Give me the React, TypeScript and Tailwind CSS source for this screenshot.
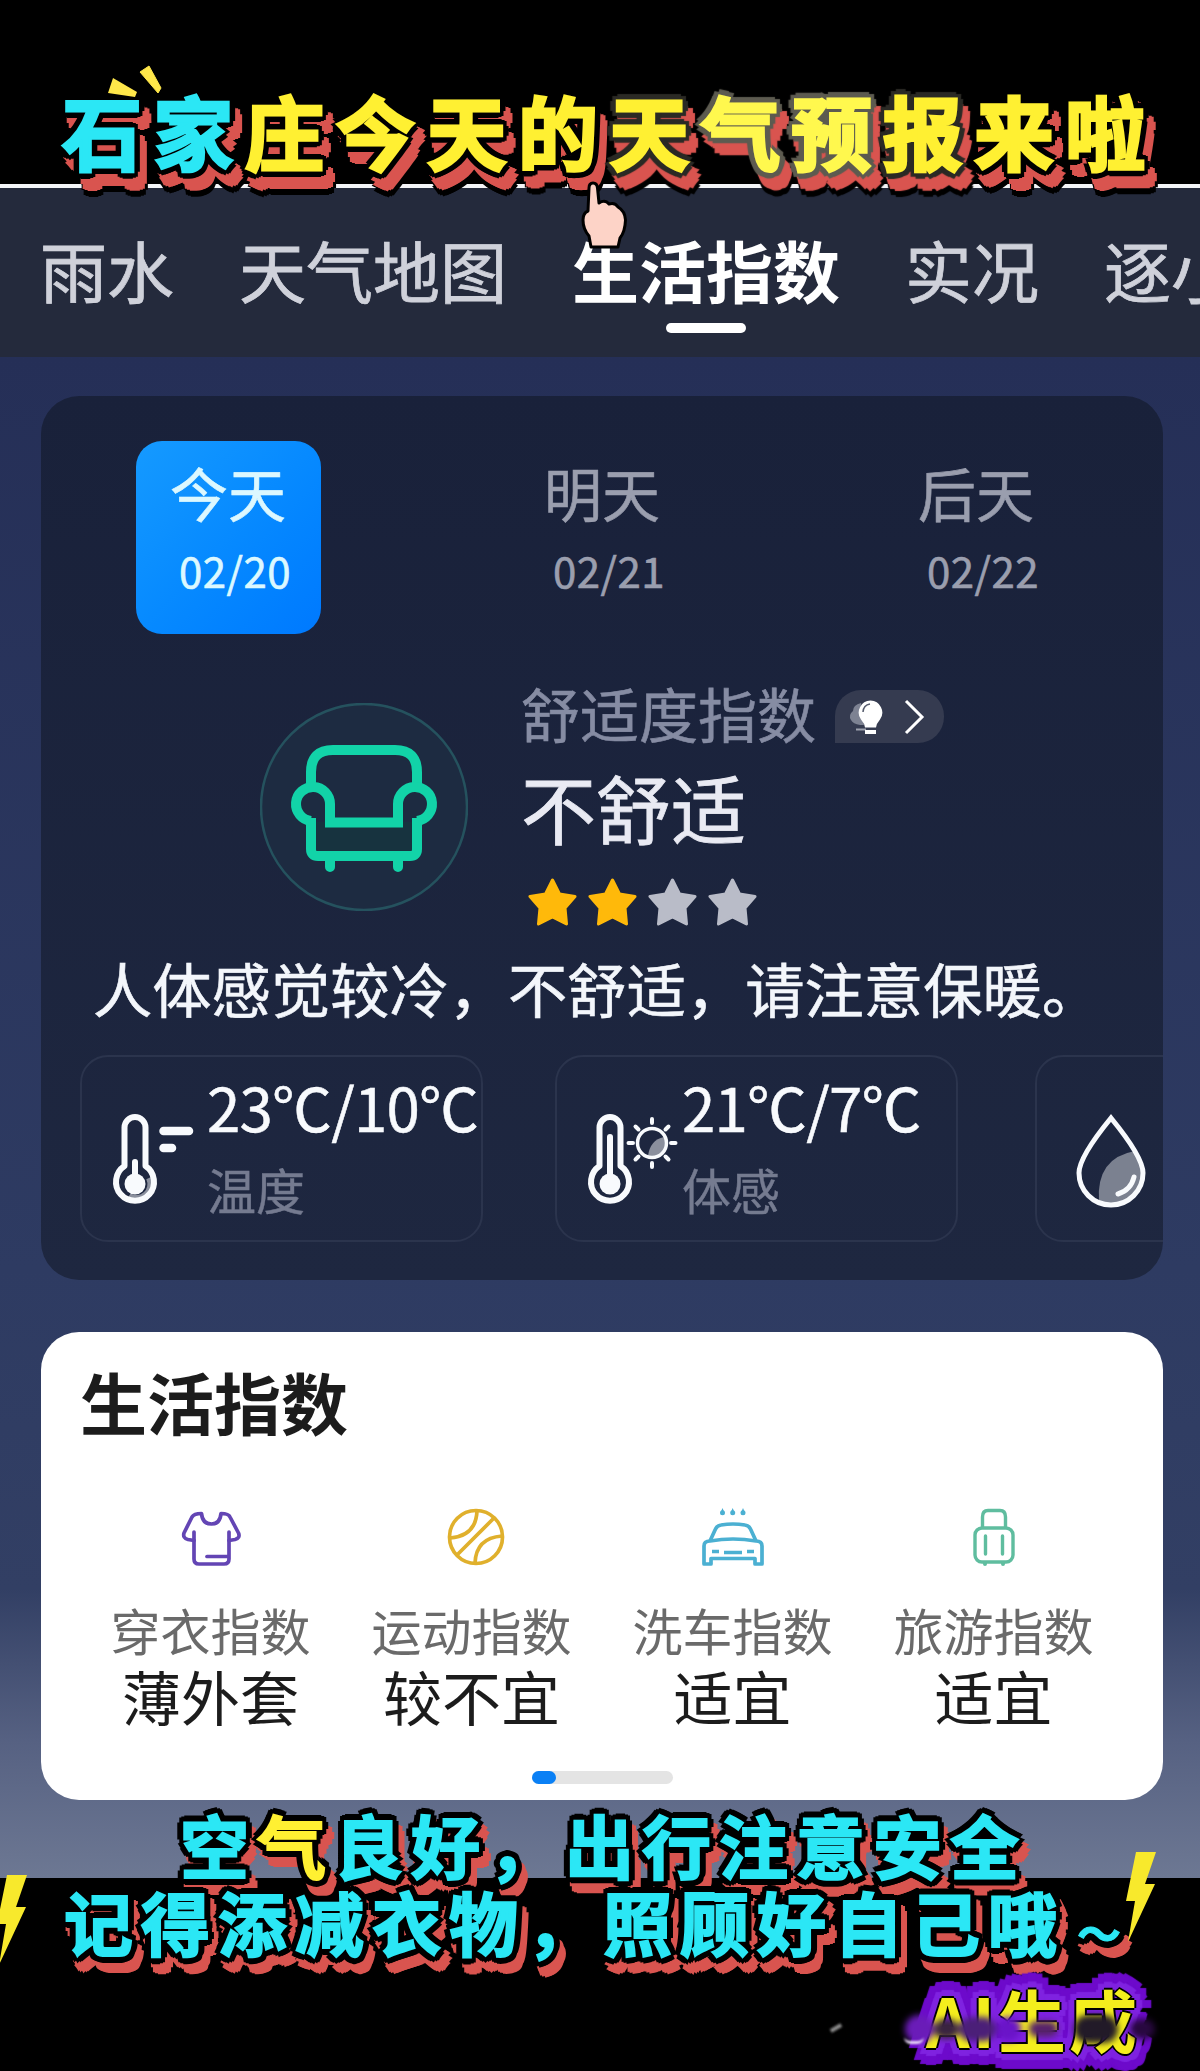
import React from 'react';

const tabs = ['雨水', '天气地图', '生活指数', '实况', '逐小时'];

const days = [
  { name: '今天', date: '02/20', active: true },
  { name: '明天', date: '02/21', active: false },
  { name: '后天', date: '02/22', active: false },
];

const outline = '[text-shadow:7px_0_0_#000,-7px_0_0_#000,0_7px_0_#000,0_-7px_0_#000,5px_5px_0_#000,-5px_5px_0_#000,5px_-5px_0_#000,-5px_-5px_0_#000,3px_6px_0_#000,-3px_6px_0_#000,3px_-6px_0_#000,-3px_-6px_0_#000]';
const outlineDim = '[text-shadow:7px_0_1px_#2b2a25,-7px_0_1px_#2b2a25,0_7px_1px_#2b2a25,0_-7px_1px_#2b2a25,5px_5px_1px_#2b2a25,-5px_5px_1px_#2b2a25,5px_-5px_1px_#2b2a25,-5px_-5px_1px_#2b2a25]';
const outlineGlow = '[text-shadow:7px_0_1px_#5d5b50,-7px_0_1px_#5d5b50,0_7px_1px_#5d5b50,0_-7px_1px_#5d5b50,5px_5px_1px_#5d5b50,-5px_5px_1px_#5d5b50,5px_-5px_1px_#5d5b50,-5px_-5px_1px_#5d5b50]';

const StarIcon: React.FC<{ on: boolean }> = ({ on }) => (
  <svg width="49" height="48" viewBox="0 0 49 48" className={on ? 'text-[#ffb90a]' : 'text-[#b9bcc8]'}>
    <path
      d="M24.500 2 L31.500 16 L47 18.500 L37 30 L38.500 46 L24.500 39 L10.500 46 L12 30 L2 18.500 L17.500 16 Z"
      fill="currentColor"
      stroke="currentColor"
      strokeWidth="3"
      strokeLinejoin="round"
    />
  </svg>
);

const SofaIcon = () => (
  <svg width="208" height="208" viewBox="260 703 208 208" fill="none">
    <circle cx="364" cy="807" r="103" fill="#1d2b41" stroke="#25525e" strokeWidth="2.500" />
    <path d="M311 821 V822 H330 H398 H417 V856 H311 Z" fill="#17333f" />
    <g stroke="#12d3a8" strokeWidth="10">
      <path d="M311 786 V772 Q311 750 333 750 H395 Q417 750 417 772 V786" />
      <path d="M311 820.900 A17 17 0 1 1 330 804 V822.500 H398 V804 A17 17 0 1 1 417 820.900" />
      <path d="M311 818 V849 Q311 856 318 856 H410 Q417 856 417 849 V818" />
      <path d="M330 856 V867 M398 856 V867" strokeLinecap="round" />
    </g>
  </svg>
);

const Thermometer: React.FC<{ top: number }> = ({ top }) => (
  <>
    <path
      d="M15.500 54 V15.500 A10.500 10.500 0 0 1 36.500 15.500 V54 A19 19 0 1 1 15.500 54 Z"
      fill="none"
      stroke="#f8fafd"
      strokeWidth="6"
      strokeLinejoin="round"
    />
    <path d={`M26 ${top} V72`} stroke="#f8fafd" strokeWidth="6" strokeLinecap="round" />
    <circle cx="26" cy="72" r="10.500" fill="#f8fafd" />
  </>
);

const TempIcon = () => (
  <svg width="90" height="98" viewBox="0 0 90 98" fill="none">
    <path d="M40 66 A14 14 0 0 1 20 84" stroke="#8a8f9d" strokeWidth="6" />
    <Thermometer top={50} />
    <path d="M54.500 19 H80" stroke="#f8fafd" strokeWidth="8.500" strokeLinecap="round" />
    <path d="M54.500 36 H63" stroke="#f8fafd" strokeWidth="8.500" strokeLinecap="round" />
  </svg>
);

const FeelIcon = () => (
  <svg width="98" height="98" viewBox="0 0 98 98" fill="none">
    <Thermometer top={25} />
    <path d="M64 44 Q66 28 80 25 A13 13 0 0 1 64 44Z" fill="#8a8f9d" />
    <circle cx="68" cy="31" r="14.500" stroke="#f8fafd" strokeWidth="3.500" />
    <path
      d="M68 7 V11 M68 51 V55 M44.500 31 H49 M87 31 H91.500 M51.500 14.500 L54.500 17.500 M81.500 44.500 L84.500 47.500 M51.500 47.500 L54.500 44.500 M81.500 17.500 L84.500 14.500"
      stroke="#f8fafd"
      strokeWidth="4"
      strokeLinecap="round"
    />
  </svg>
);

const DropIcon = () => (
  <svg width="74" height="96" viewBox="0 0 74 96" fill="none">
    <path d="M25 88 Q22 45 61 38 Q68 52 68 62 Q66 88 38 91 Q30 91 25 88Z" fill="#7b8190" />
    <path d="M37 5 Q5 44 5 60 A32 32 0 0 0 69 60 Q69 44 37 5Z" stroke="#f8fafd" strokeWidth="5" />
    <path d="M60 64 Q57 77 44 81" stroke="#f8fafd" strokeWidth="5" strokeLinecap="round" />
  </svg>
);

const ShirtIcon = () => (
  <svg width="60" height="58" viewBox="0 0 60 58" fill="none" stroke="#6345b4" strokeWidth="3.700" strokeLinecap="round" strokeLinejoin="round">
    <path d="M13 24 V51 Q13 56 18 56 H43 Q48 56 48 51 V24" />
    <path d="M13 32.500 L7 31.500 Q1.500 30 3 25 L11 9 Q13 5.500 20.500 5.500 Q21.500 16 30.500 16 Q39 16 40 5.500 Q47.500 5.500 49 9 L57.500 25 Q59.500 30 54 31.500 L48 32.500" />
    <path d="M26 48.500 H47" />
  </svg>
);

const BallIcon = () => (
  <svg width="58" height="58" viewBox="0 0 58 58" fill="none" stroke="#e0b02c" strokeWidth="3.700" strokeLinecap="round" className="ml-2">
    <circle cx="29" cy="29" r="26.500" />
    <path d="M11 46 L47 10" />
    <path d="M30 3 Q29 28 3 30" />
    <path d="M28 55 Q29 30 55 28" />
  </svg>
);

const CarIcon = () => (
  <svg width="62" height="58" viewBox="0 0 62 58" fill="none" stroke="#4bb0d2" strokeWidth="3.700" strokeLinejoin="round">
    <path d="M8 33 L13.500 21 Q15 17.500 19 17 Q31 15 43 17 Q47 17.500 48.500 21 L54 33" />
    <path d="M8 33 Q2 33 2 38 V56 H9 V50.500 H53 V56 H60 V38 Q60 33 54 33 Q31 29 8 33Z" />
    <path d="M10 43.500 H17 M22 44.500 H40 M45 43.500 H52" />
    <g fill="#4bb0d2" stroke="none">
      <path d="M20.500 0 Q24 7 20.500 7 Q17 7 20.500 0Z M30.700 0 Q34 7 30.700 7 Q27 7 30.700 0Z M41 0 Q44.500 7 41 7 Q37.500 7 41 0Z" />
      <circle cx="20.500" cy="4.800" r="2.500" />
      <circle cx="30.700" cy="4.800" r="2.500" />
      <circle cx="41" cy="4.800" r="2.500" />
    </g>
  </svg>
);

const LuggageIcon = () => (
  <svg width="42" height="58" viewBox="0 0 42 58" fill="none" stroke="#5fbd9f" strokeWidth="3.400" strokeLinecap="round">
    <path d="M9.500 19 V9 Q9.500 2.500 15 2.500 H27 Q32.500 2.500 32.500 9 V19" />
    <rect x="2" y="20" width="38" height="34" rx="7" />
    <path d="M12.500 28 V46 M29.500 28 V46" />
    <path d="M12 55.500 V56 M30 55.500 V56" strokeWidth="4" />
  </svg>
);

const BulbIcon = () => (
  <svg width="36" height="36" viewBox="0 0 36 36">
    <path d="M13 4 Q5 6 5 12 Q0 16 3 21 Q5 25 12 26 H16Z" fill="#7d8292" />
    <path d="M8 30.500 H18" stroke="#9ea2ae" strokeWidth="2" />
    <path d="M22.500 1.500 A12 12 0 0 0 13 20.500 Q16.500 24.500 17 28.500 H28 Q28.500 24.500 32 20.500 A12 12 0 0 0 22.500 1.500Z" fill="#fff" />
    <path d="M15 13 Q15.500 6 22 5" fill="none" stroke="#555b6d" strokeWidth="1.500" />
    <path d="M17 31 H28 V35 H17Z" fill="#fff" />
  </svg>
);

const BoltIcon = () => (
  <svg width="32" height="92" viewBox="0 0 32 92">
    <path d="M11 1 H31 L20 33 H30 L3 91 L10 50 H1 Z" fill="#f8e92c" />
  </svg>
);

const metrics = [
  { value: '23℃/10℃', label: '温度', icon: <TempIcon /> },
  { value: '21℃/7℃', label: '体感', icon: <FeelIcon /> },
];

const indexes = [
  { name: '穿衣指数', value: '薄外套', icon: <ShirtIcon /> },
  { name: '运动指数', value: '较不宜', icon: <BallIcon /> },
  { name: '洗车指数', value: '适宜', icon: <CarIcon /> },
  { name: '旅游指数', value: '适宜', icon: <LuggageIcon /> },
];

const TabBar = () => (
  <nav className="flex h-[173px] w-full gap-[65px] overflow-hidden border-t-4 border-[#f4f5f8] bg-[#242a3c] pl-10 pt-[47px]">
    {tabs.map((tab) => (
      <div key={tab} className="flex shrink-0 flex-col items-center">
        <span
          className={`text-[67px] leading-[67px] ${
            tab === '生活指数' ? 'font-bold text-white' : 'text-[#cfd1da] [-webkit-text-stroke:0.8px_#cfd1da]'
          }`}
        >
          {tab}
        </span>
        {tab === '生活指数' && <span className="mt-[21px] h-2.5 w-20 rounded-full bg-white" />}
      </div>
    ))}
  </nav>
);

const ComfortCard = () => (
  <section className="h-[884px] overflow-hidden rounded-[38px] bg-linear-to-b from-[#19213a] to-[#1e2740] pt-[45px]">
    <div className="grid grid-cols-3 justify-items-center">
      {days.map((day) => (
        <div
          key={day.name}
          className={`flex h-[193px] w-[185px] flex-col items-center rounded-[26px] pt-[22px] ${
            day.active
              ? 'bg-linear-to-br from-[#159aff] to-[#0079ff] text-[#dcf8ff] [-webkit-text-stroke:0.6px_#dcf8ff]'
              : 'text-[#9a9eae] [-webkit-text-stroke:0.6px_#9a9eae]'
          }`}
        >
          <span className="text-[58px] leading-[58px]">{day.name}</span>
          <span className="mt-[27px] pl-3.5 text-[42px] leading-[44px] tracking-[0.500px]">{day.date}</span>
        </div>
      ))}
    </div>

    <div className="mt-[49px] flex pl-[219px]">
      <div className="mt-5 shrink-0">
        <SofaIcon />
      </div>
      <div className="ml-[53px]">
        <div className="flex h-[59px] items-center">
          <span className="text-[59px] leading-[59px] text-[#868ca3] [-webkit-text-stroke:0.6px_#868ca3]">舒适度指数</span>
          <div className="ml-[19px] mt-2 flex h-[53px] w-[109px] items-center rounded-[26px] rounded-bl-none bg-[#353b50] pl-[13px]">
            <BulbIcon />
            <svg width="22" height="36" viewBox="0 0 22 36" fill="none" className="ml-5">
              <path d="M2 2 L18 18 L2 34" stroke="#fff" strokeWidth="3" />
            </svg>
          </div>
        </div>
        <div className="mt-[27px] text-[75px] leading-[75px] text-[#e9eaf3] [-webkit-text-stroke:0.8px_#e9eaf3]">不舒适</div>
        <div className="mt-[34px] flex gap-[11px] pl-[7px]">
          {[1, 2, 3, 4].map((n) => (
            <StarIcon key={n} on={n <= 2} />
          ))}
        </div>
      </div>
    </div>

    <p className="mt-[31px] whitespace-nowrap pl-[52px] text-[59.300px] leading-[60px] text-[#f3f6fb] [-webkit-text-stroke:0.6px_#f3f6fb]">
      人体感觉较冷，不舒适，请注意保暖。
    </p>

    <div className="mt-[38px] flex pl-[39px]">
      {metrics.map((m) => (
        <div key={m.label} className="mr-[72px] flex h-[187px] w-[403px] shrink-0 rounded-[28px] border-2 border-[#2b344d] pl-[27px] pt-[19px]">
          <div className="mt-[36px] w-[98px] shrink-0">{m.icon}</div>
          <div className="flex flex-col">
            <span className="whitespace-nowrap text-[60px] leading-[60px] tracking-[-0.800px] text-[#f8fafd] [-webkit-text-stroke:0.5px_#f8fafd]">
              {m.value}
            </span>
            <span className="mt-7 text-[49px] leading-[49px] text-[#757b90] [-webkit-text-stroke:0.4px_#757b90]">{m.label}</span>
          </div>
        </div>
      ))}
      <div className="ml-[5px] h-[187px] w-[403px] shrink-0 rounded-[28px] border-2 border-[#2b344d] pl-[37px] pt-[56px]">
        <DropIcon />
      </div>
    </div>
  </section>
);

const LifeIndexCard = () => (
  <section className="mt-[52px] h-[468px] rounded-[38px] bg-white pt-[35px]">
    <h2 className="pl-[39px] text-[67px] font-bold leading-[67px] text-[#1c1c1c]">生活指数</h2>
    <div className="mt-[74px] grid grid-cols-4 pl-[39px] pr-[39px]">
      {indexes.map((item) => (
        <div key={item.name} className="flex flex-col items-center whitespace-nowrap">
          {item.icon}
          <span className="mt-[38px] text-[50px] leading-[50px] text-[#6a6a6a]">{item.name}</span>
          <span className="mt-3 text-[59px] leading-[59px] text-[#1c1c1c]">{item.value}</span>
        </div>
      ))}
    </div>
    <div className="mx-auto mt-[46px] h-[13px] w-[141px] rounded-full bg-[#e4e4e4]">
      <div className="h-full w-6 rounded-full bg-[#0a80f5]" />
    </div>
  </section>
);

// Captions and stickers laid over the page
const Stickers = () => (
  <>
    <h1 className="absolute left-[62px] top-[87px] whitespace-nowrap text-[80px] font-bold leading-[85px] tracking-[11.200px] text-[#fff032] [filter:drop-shadow(7px_12px_0_#d9544f)_drop-shadow(1px_6px_0_#000)]">
      <span className={`text-[#2be7f5] [-webkit-text-stroke:3px_#2be7f5] ${outline}`}>石家</span>
      <span className={`[-webkit-text-stroke:3px_#fff032] ${outline}`}>庄今天的</span>
      <span className={`[-webkit-text-stroke:3px_#fff032] ${outlineDim}`}>天</span>
      <span className={`text-[#fff84e] [-webkit-text-stroke:3px_#fff84e] ${outlineGlow}`}>气预</span>
      <span className={`[-webkit-text-stroke:3px_#fff032] ${outlineDim}`}>报</span>
      <span className={`[-webkit-text-stroke:3px_#fff032] ${outline}`}>来啦</span>
    </h1>
    <svg className="absolute left-[104px] top-[60px]" width="62" height="40" viewBox="104 60 62 40" fill="#ffe74a">
      <path d="M113 78 L137 92 L135 97 L108 93Z" />
      <path d="M140 72 L149 66 L161 88 L158 93Z" stroke="#ffe74a" strokeWidth="1" strokeLinejoin="round" />
    </svg>
    <svg className="absolute left-[578px] top-[179px]" width="54" height="74" viewBox="578 178 54 74">
      <path
        d="M589 187 Q589 182 593 182 Q597 182 597.500 187 L599 202 Q605 198 609 203 Q615 201 618 206 Q625 210 625.500 219 Q625 231 620 237 L618 246 H591 L589 235 Q583 228 583 219 Q583 212 588 210 Z"
        fill="#fdd3c7"
        stroke="#000"
        strokeWidth="3"
        strokeLinejoin="round"
      />
    </svg>

    <div className="absolute left-0 top-[1806px] w-full whitespace-nowrap text-[69px] font-bold leading-[77px] tracking-[8px] text-[#2be7f5] [-webkit-text-stroke:2px_#2be7f5] [filter:drop-shadow(6px_10px_0_#d9544f)]">
      <p className={`pl-[180px] ${outline}`}>
        空<span className="text-[#fff032] [-webkit-text-stroke:2px_#fff032]">气</span>良好，出行注意安全
      </p>
      <p className={`pl-[64px] ${outline}`}>
        记得添减衣物，照顾好自己哦<span className="pl-3 text-[44px] [-webkit-text-stroke:1px_#2be7f5]">～</span>
      </p>
    </div>
    <div className="absolute left-[-4px] top-[1874px]">
      <BoltIcon />
    </div>
    <div className="absolute left-[1125px] top-[1851px]">
      <BoltIcon />
    </div>

    <div className="absolute left-[926px] top-[1983px] whitespace-nowrap text-[68px] font-bold leading-[72px] tracking-[3px] text-[#f4ee1d]">
      <span className="[text-shadow:2px_0_0_#000,-2px_0_0_#000,0_2px_0_#000,0_-2px_0_#000,8px_0_1px_#7f22e0,-8px_0_1px_#7f22e0,0_8px_1px_#7f22e0,0_-8px_1px_#7f22e0,6px_6px_1px_#7f22e0,-6px_6px_1px_#7f22e0,6px_-6px_1px_#7f22e0,-6px_-6px_1px_#7f22e0,17px_0_1px_#6d0acb,-17px_0_1px_#6d0acb,0_17px_1px_#6d0acb,0_-17px_1px_#6d0acb,12px_12px_1px_#6d0acb,-12px_12px_1px_#6d0acb,12px_-12px_1px_#6d0acb,-12px_-12px_1px_#6d0acb,6px_16px_1px_#6d0acb,-6px_16px_1px_#6d0acb,6px_-16px_1px_#6d0acb,-6px_-16px_1px_#6d0acb]">
        AI生成
      </span>
    </div>
    <div className="absolute left-[905px] top-[2015px] flex h-7 w-[250px] items-center blur-[3px]">
      <span className="h-7 w-8 rounded-full bg-[#6a1cb8]" />
      <span className="h-5 w-7 rounded-full bg-[#3a2440]" />
      <span className="h-6 w-10 rounded-full bg-[#4b1f78]" />
      <span className="h-6 w-7 rounded-full bg-[#6a14c8]" />
      <span className="ml-2 h-4 w-8 rounded-full bg-[#57226b]" />
      <span className="ml-4 h-7 w-12 rounded-full bg-[#221a28]" />
      <span className="ml-3 h-5 w-7 rounded-full bg-[#28083f]" />
    </div>
    <div className="absolute left-[904px] top-[2030px] h-3.5 w-5 rounded-full border-b-3 border-[#efe2fb] blur-[1px]" />
    <div className="absolute left-[830px] top-[2026px] h-1 w-3 -rotate-30 bg-[#8c8c8c] blur-[1px]" />
  </>
);

export default function App() {
  return (
    <div className="relative h-[2071px] w-[1200px] overflow-hidden bg-black font-['Noto_Sans_CJK_SC',sans-serif]">
      <div className="h-[184px]" />
      <TabBar />
      <main className="h-[1521px] bg-[linear-gradient(#252f57,#2e3b62_60%,#323f64_81%,#566182_91%,#6d7893)] pl-[41px] pr-[37px] pt-[39px]">
        <ComfortCard />
        <LifeIndexCard />
      </main>
      <Stickers />
    </div>
  );
}
